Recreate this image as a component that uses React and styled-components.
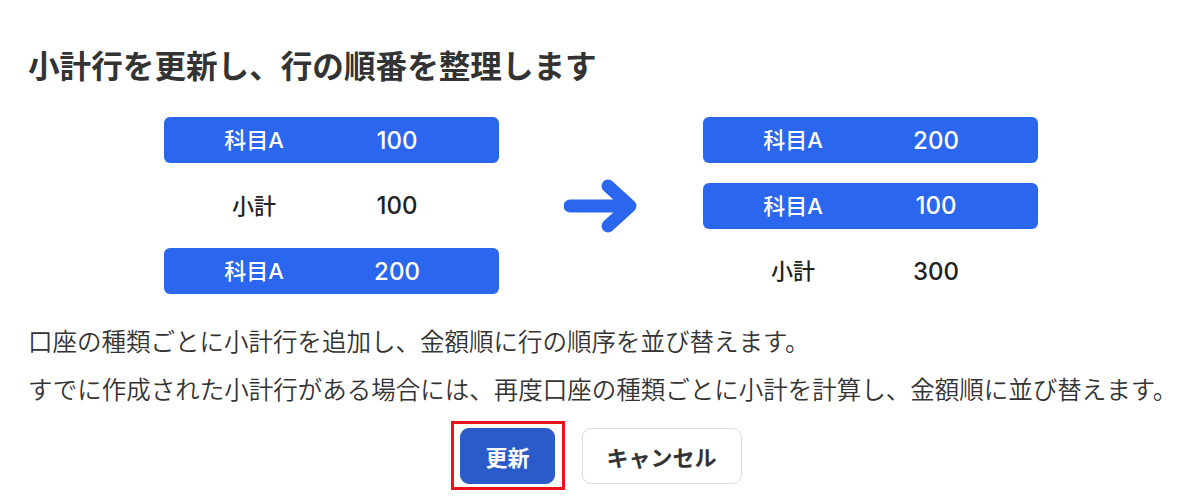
import styled, { createGlobalStyle } from "styled-components";

const GlobalStyle = createGlobalStyle`
  html, body {
    margin: 0;
    padding: 0;
    background: #ffffff;
  }
  body {
    font-family: "Noto Sans CJK JP", "Noto Sans", sans-serif;
    color: #333333;
  }
`;

const beforeRows = [
  { label: "科目A", value: "100", highlight: true },
  { label: "小計", value: "100", highlight: false },
  { label: "科目A", value: "200", highlight: true },
];

const afterRows = [
  { label: "科目A", value: "200", highlight: true },
  { label: "科目A", value: "100", highlight: true },
  { label: "小計", value: "300", highlight: false },
];

function RowList({ rows }) {
  return (
    <RowGroup>
      {rows.map((row, i) => (
        <Row key={i} $highlight={row.highlight}>
          <RowLabel>{row.label}</RowLabel>
          <RowValue>{row.value}</RowValue>
        </Row>
      ))}
    </RowGroup>
  );
}

function ArrowIcon() {
  return (
    <svg width="74" height="54" viewBox="0 0 74 54" fill="none">
      <path
        d="M6 27 H66 M44 7 L66 27 L44 47"
        stroke="#2b66ef"
        strokeWidth="13"
        strokeLinecap="round"
        strokeLinejoin="round"
      />
    </svg>
  );
}

export default function App() {
  return (
    <>
      <GlobalStyle />
      <Dialog>
        <Title>小計行を更新し、行の順番を整理します</Title>
        <Diagram>
          <RowList rows={beforeRows} />
          <ArrowBox>
            <ArrowIcon />
          </ArrowBox>
          <RowList rows={afterRows} />
        </Diagram>
        <Description>
          <p>口座の種類ごとに小計行を追加し、金額順に行の順序を並び替えます。</p>
          <p>
            すでに作成された小計行がある場合には、再度口座の種類ごとに小計を計算し、金額順に並び替えます。
          </p>
        </Description>
        <Actions>
          <Button $primary $focused>
            更新
          </Button>
          <Button>キャンセル</Button>
        </Actions>
      </Dialog>
    </>
  );
}

const Dialog = styled.div`
  width: 1202px;
  height: 496px;
  box-sizing: border-box;
  padding: 43px 28px 0;
  overflow: hidden;
`;

const Title = styled.h1`
  margin: 0;
  font-size: 31.6px;
  line-height: 43px;
  font-weight: 700;
  color: #333333;
`;

const Diagram = styled.div`
  display: flex;
  justify-content: center;
  align-items: center;
  gap: 65px;
  margin-top: 31px;
`;

const RowGroup = styled.div`
  display: flex;
  flex-direction: column;
  gap: 19.5px;
  width: 335px;
`;

const Row = styled.div`
  display: grid;
  grid-template-columns: 180px 106px 1fr;
  align-items: center;
  height: 46px;
  border-radius: 6px;
  background: ${(p) => (p.$highlight ? "#2b66ef" : "transparent")};
  color: ${(p) => (p.$highlight ? "#ffffff" : "#222222")};
  font-family: "Inter", "Noto Sans CJK JP", sans-serif;
  font-size: 22px;
  font-weight: 500;
`;

const RowLabel = styled.span`
  text-align: center;
  padding-bottom: 4px;
`;

const RowValue = styled.span`
  text-align: center;
  font-size: 24px;
`;

const ArrowBox = styled.div`
  display: flex;
  align-items: center;
  justify-content: center;
  width: 74px;
`;

const Description = styled.div`
  margin-top: 23px;

  p {
    margin: 0;
    font-size: 24.5px;
    line-height: 48px;
    font-weight: 350;
    color: #333333;
    white-space: nowrap;
  }
`;

const Actions = styled.div`
  display: flex;
  justify-content: center;
  gap: 27px;
  margin-top: 15px;
`;

const Button = styled.button`
  position: relative;
  height: 56px;
  padding: 0 24px;
  border-radius: 9px;
  font-family: "Noto Sans CJK JP", "Noto Sans", sans-serif;
  font-size: 22px;
  font-weight: 700;
  cursor: pointer;
  border: 1px solid ${(p) => (p.$primary ? "#2a5bc8" : "#dddddd")};
  background: ${(p) => (p.$primary ? "#2a5bc8" : "#ffffff")};
  color: ${(p) => (p.$primary ? "#ffffff" : "#333333")};

  &::after {
    content: "";
    display: ${(p) => (p.$focused ? "block" : "none")};
    position: absolute;
    top: -8px;
    bottom: -7px;
    left: -10px;
    right: -11px;
    border: 3px solid #e8141c;
    pointer-events: none;
  }
`;
